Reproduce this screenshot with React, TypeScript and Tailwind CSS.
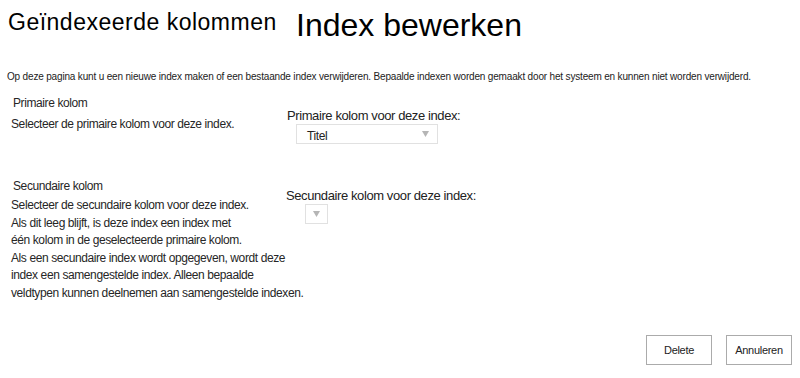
import React from "react";

const font = { fontFamily: '"Liberation Sans", Arial, sans-serif' };

function Arrow() {
  return (
    <svg width="7" height="6" viewBox="0 0 7 6" className="block">
      <polygon points="0,0 7,0 3.5,6" fill="#b5b5b5" />
    </svg>
  );
}

export default function App() {
  return (
    <div className="w-[800px] h-[378px] bg-white text-black relative overflow-hidden" style={font}>
      {/* kop */}
      <div className="flex items-start pl-[8px]">
        <h1 className="text-[23px] leading-[30px] w-[288px] tracking-[0.5px] pt-[7px]">Geïndexeerde kolommen</h1>
        <h2 className="text-[32px] leading-[40px] pt-[5px]">Index bewerken</h2>
      </div>

      <p className="mt-[25px] pl-[7px] text-[10px] leading-[14px] tracking-[-0.17px] text-[#222] whitespace-nowrap">
        Op deze pagina kunt u een nieuwe index maken of een bestaande index verwijderen. Bepaalde indexen worden gemaakt door het systeem en kunnen niet worden verwijderd.
      </p>

      {/* primaire kolom */}
      <div className="flex mt-[10px]">
        <div className="w-[287px] pl-[11px] text-[12px] tracking-[-0.4px] text-[#262626] whitespace-nowrap">
          <div className="leading-[18px] pl-[2px]">Primaire kolom</div>
          <div className="leading-[18px] mt-[3px]">Selecteer de primaire kolom voor deze index.</div>
        </div>
        <div className="pt-[14px] text-[13px] tracking-[-0.4px] text-[#222]">
          <div className="leading-[16px]">Primaire kolom voor deze index:</div>
          <div className="ml-[9px] mt-0 w-[142px] h-[20px] border border-[#e1e1e1] flex items-center justify-between pl-[10px] pr-[8px]">
            <span className="text-[12px] leading-[16px] pt-[3px]">Titel</span>
            <Arrow />
          </div>
        </div>
      </div>

      {/* secundaire kolom */}
      <div className="flex mt-[33px]">
        <div className="w-[286px] pl-[11px] text-[12px] tracking-[-0.4px] text-[#262626] whitespace-nowrap">
          <div className="leading-[18px] pl-[2px]">Secundaire kolom</div>
          <div className="leading-[17.5px] mt-[2px]">
            Selecteer de secundaire kolom voor deze index.
            <br />
            Als dit leeg blijft, is deze index een index met
            <br />
            één kolom in de geselecteerde primaire kolom.
            <br />
            Als een secundaire index wordt opgegeven, wordt deze
            <br />
            index een samengestelde index. Alleen bepaalde
            <br />
            veldtypen kunnen deelnemen aan samengestelde indexen.
          </div>
        </div>
        <div className="pt-[11px] text-[13px] tracking-[-0.4px] text-[#222]">
          <div className="leading-[16px]">Secundaire kolom voor deze index:</div>
          <div className="ml-[19px] mt-0 w-[23px] h-[20px] border border-[#e1e1e1] flex items-center justify-center">
            <Arrow />
          </div>
        </div>
      </div>

      {/* knoppen */}
      <div className="absolute right-[8px] bottom-[13px] flex gap-[14px] text-[11px] tracking-[-0.3px] text-[#222]">
        <button className="w-[66px] h-[30px] border border-[#ababab] bg-white">Delete</button>
        <button className="w-[66px] h-[30px] border border-[#ababab] bg-white">Annuleren</button>
      </div>
    </div>
  );
}
